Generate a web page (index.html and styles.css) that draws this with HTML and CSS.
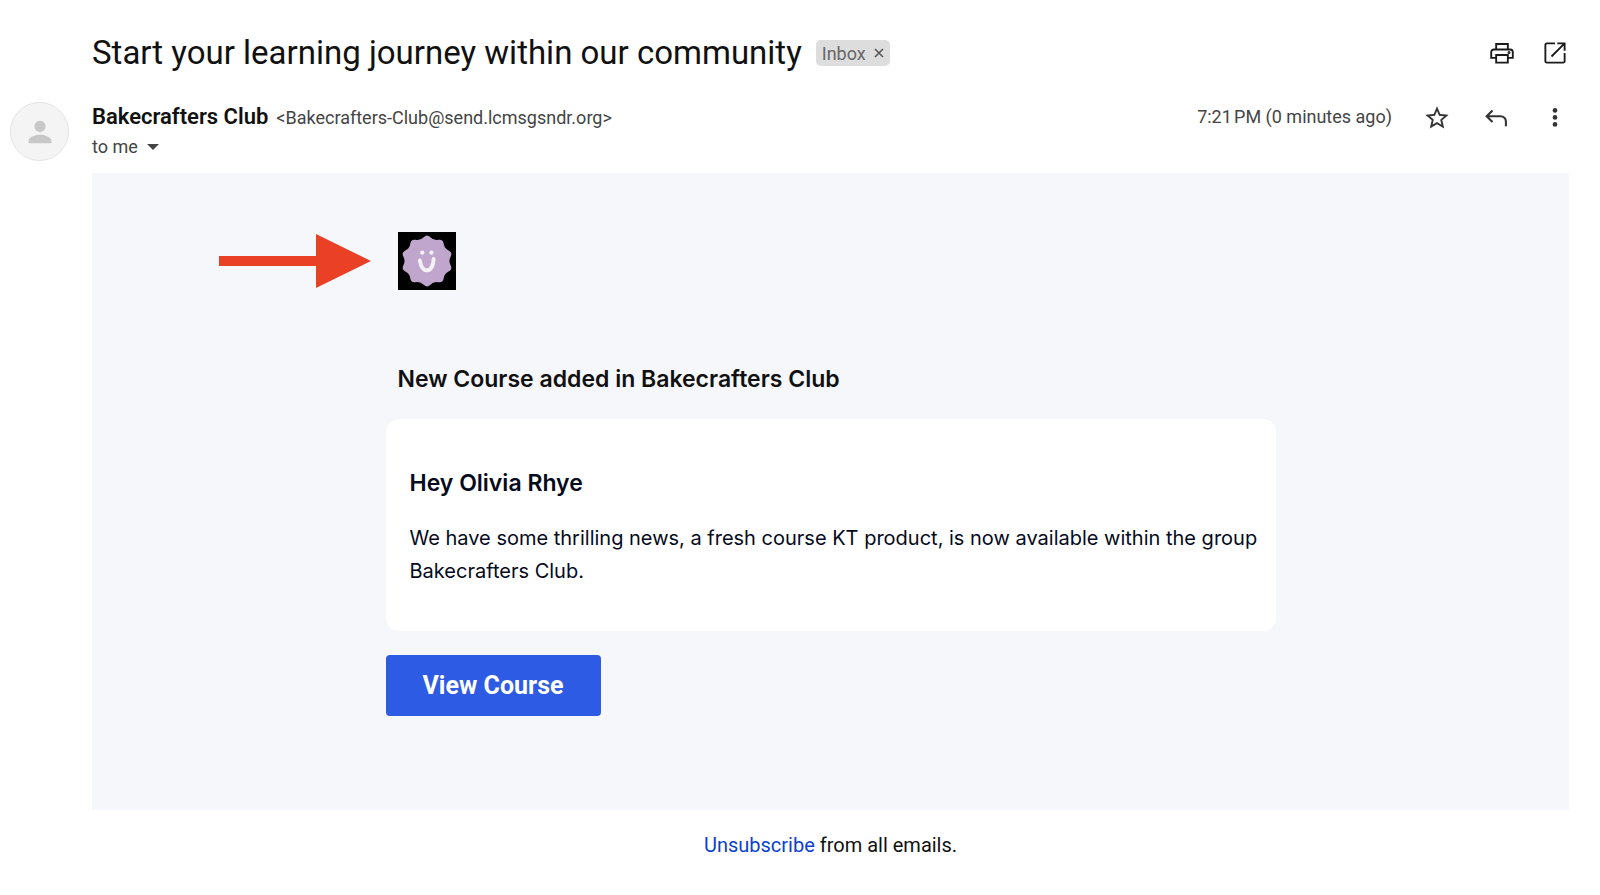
FILE: index.html
```html
<!DOCTYPE html>
<html lang="en">
<head>
    <meta charset="UTF-8">
    <title>Start your learning journey within our community</title>
    <link rel="stylesheet" href="styles.css">
</head>
<body>
    <main class="message">
        <div class="subject-row">
            <h1>Start your learning journey within our community</h1>
            <span class="label">Inbox
                <button class="label-remove" aria-label="Remove label">
                    <svg viewBox="0 0 10 10" width="10" height="10"><path d="M1 1l8 8M9 1l-8 8" stroke="#555" stroke-width="1.6"/></svg>
                </button>
            </span>
            <div class="subject-tools">
                <button class="icon" aria-label="Print">
                    <svg class="outline" viewBox="0 0 24 24"><path d="M7 8.800V4.250h10V8.800M6.500 16.200H2.750V11.200a2.200 2.200 0 0 1 2.200-2.200h14.100a2.200 2.200 0 0 1 2.200 2.200v5H17.500M7 13.750h10v6.500H7z"/><circle cx="18" cy="11.600" r=".5"/></svg>
                </button>
                <button class="icon" aria-label="Open in new window">
                    <svg class="outline" viewBox="0 0 24 24"><path d="M12 3.750H5A1.250 1.250 0 0 0 3.750 5v14A1.250 1.250 0 0 0 5 20.250h14A1.250 1.250 0 0 0 20.250 19v-7M14 3.750h6.250V10M20 4L9 15"/></svg>
                </button>
            </div>
        </div>

        <div class="avatar">
            <svg viewBox="0 0 24 24" width="34" height="34"><path fill="#c8c8c8" d="M12 12c2.2 0 4-1.8 4-4s-1.8-4-4-4-4 1.8-4 4 1.8 4 4 4zm0 2c-2.7 0-8 1.3-8 4v2h16v-2c0-2.700-5.300-4-8-4z"/></svg>
        </div>
        <header class="sender">
            <div>
                <div class="from"><b>Bakecrafters Club</b><span>&lt;Bakecrafters-Club@send.lcmsgsndr.org&gt;</span></div>
                <button class="to">to me <i class="caret"></i></button>
            </div>
            <div class="sender-tools">
                <time>7:21&#8239;PM (0 minutes ago)</time>
                <button class="icon" aria-label="Star">
                    <svg viewBox="0 0 24 24"><path d="M22 9.240l-7.190-.62L12 2 9.190 8.630 2 9.240l5.460 4.730L5.820 21 12 17.270 18.180 21l-1.630-7.030L22 9.240zM12 15.400l-3.760 2.270 1-4.280-3.320-2.880 4.380-.38L12 6.100l1.710 4.040 4.380.38-3.320 2.880 1 4.280L12 15.400z"/></svg>
                </button>
                <button class="icon" aria-label="Reply">
                    <svg viewBox="0 0 24 24"><path d="M9 5.500L4 10.500 9 15.500M4.500 10.500H16a4.500 4.500 0 0 1 4.500 4.500V19" fill="none" stroke="#333" stroke-width="1.800"/></svg>
                </button>
                <button class="icon" aria-label="More">
                    <svg viewBox="0 0 24 24"><circle cx="12" cy="5.500" r="2"/><circle cx="12" cy="11.500" r="2"/><circle cx="12" cy="17.500" r="2"/></svg>
                </button>
            </div>
        </header>

        <section class="mail">
            <div class="mail-inner">
                <div class="logo-row">
                    <svg class="arrow" viewBox="0 0 152 54" width="152" height="54"><path fill="#ea4025" d="M0 22h97V0l55 27-55 27V32H0z"/></svg>
                    <svg class="logo" viewBox="0 0 59 59" width="58" height="58">
                        <rect width="59" height="59"/>
                        <path fill="#c0a6cd" d="M26.2 5.4Q29.5 1.8 32.9 5.4Q36.2 8.900 41 8Q45.800 7.100 46.500 11.900Q47.100 16.700 51.500 18.800Q55.800 20.900 53.500 25.200Q51.200 29.500 53.500 33.800Q55.800 38.100 51.500 40.200Q47.100 42.300 46.500 47.100Q45.800 51.900 41 51Q36.200 50.100 32.900 53.700Q29.500 57.200 26.200 53.700Q22.800 50.100 18 51Q13.200 51.900 12.500 47.100Q11.900 42.300 7.500 40.200Q3.200 38.100 5.500 33.800Q7.800 29.500 5.500 25.200Q3.200 20.900 7.500 18.800Q11.900 16.700 12.500 11.900Q13.200 7.100 18 8Q22.800 8.900 26.200 5.400z"/>
                        <circle cx="24.700" cy="21" r="2.200" fill="#f3f1f5"/>
                        <circle cx="34" cy="21" r="2.200" fill="#f3f1f5"/>
                        <path d="M22.200 29c1 6 3 10 7 10s6.500-4.500 7-11.500" fill="none" stroke="#f3f1f5" stroke-width="4" stroke-linecap="round"/>
                    </svg>
                </div>
                <h2 class="mail-title">New Course added in Bakecrafters Club</h2>
                <div class="card">
                    <h2>Hey Olivia Rhye</h2>
                    <p>We have some thrilling news, a fresh course KT product, is now available within the group Bakecrafters Club.</p>
                </div>
                <a class="view-course" href="#">View Course</a>
            </div>
        </section>
        <footer><a href="#">Unsubscribe</a> from all emails.</footer>
    </main>
</body>
</html>
```
FILE: styles.css
```css
body {
    margin: 0;
    background: #fff;
    font-family: Roboto, "Liberation Sans", sans-serif;
    color: #111;
}
h1, h2, p {
    margin: 0;
}
button {
    border: 0;
    padding: 0;
    background: none;
    font: inherit;
    color: inherit;
    cursor: pointer;
}
.message {
    display: grid;
    grid-template-columns: 82px 1fr;
    padding: 32px 31px 32px 10px;
}
.subject-row {
    grid-column: 2;
    display: flex;
    align-items: center;
    height: 42px;
}
h1 {
    font-size: 33px;
    font-weight: 400;
    line-height: 42px;
}
.label {
    display: flex;
    align-items: center;
    gap: 8px;
    height: 26px;
    margin-left: 14px;
    padding: 0 6px;
    border-radius: 5px;
    background: #ddd;
    color: #666;
    font-size: 18px;
}
.label-remove {
    display: flex;
}
.subject-tools {
    display: flex;
    gap: 25px;
    margin-left: auto;
}
.icon {
    width: 28px;
    height: 28px;
}
.icon svg {
    display: block;
    width: 28px;
    height: 28px;
    fill: #333;
}
.icon .outline {
    fill: none;
    stroke: #1a1a1a;
    stroke-width: 1.6;
}
.avatar {
    display: flex;
    align-items: center;
    justify-content: center;
    box-sizing: border-box;
    width: 59px;
    height: 59px;
    margin-top: 28px;
    border: 1px solid #e4e4e4;
    border-radius: 50%;
    background: #f4f4f4;
}
.sender {
    display: flex;
    justify-content: space-between;
    height: 71px;
    margin-top: 28px;
    color: #444;
    font-size: 18px;
}
.from {
    line-height: 30px;
}
.from b {
    margin-right: 8px;
    color: #111;
    font-size: 22px;
    font-weight: 600;
}
.to {
    display: flex;
    align-items: center;
    gap: 9px;
    line-height: 28px;
}
.caret {
    border: 6px solid transparent;
    border-top-color: #444;
    border-bottom: 0;
}
.sender-tools {
    display: flex;
    align-items: center;
    gap: 31px;
    height: 32px;
}
.sender-tools time {
    line-height: 30px;
    align-self: flex-start;
}
.mail {
    grid-column: 2;
    box-sizing: border-box;
    min-height: 637px;
    padding-top: 59px;
    background: #f6f7fb;
    font-family: Inter, sans-serif;
}
.mail-inner {
    max-width: 890px;
    margin: 0 auto;
}
.logo-row {
    position: relative;
    padding-left: 12px;
    height: 59px;
}
.arrow {
    position: absolute;
    left: -167px;
    top: 2px;
}
.mail-title {
    margin: 72px 12px 24px;
    font-size: 23px;
    line-height: 32px;
    font-weight: 600;
}
.card {
    padding: 48px 16px 43px 24px;
    border-radius: 13px;
    background: #fff;
    color: #050a1c;
}
.card h2 {
    margin-bottom: 23px;
    font-size: 23px;
    line-height: 32px;
    font-weight: 600;
}
.card p {
    font-size: 20px;
    line-height: 33px;
}
.view-course {
    display: inline-block;
    margin-top: 24px;
    padding: 0 37px;
    border-radius: 4px;
    background: #2d5be3;
    color: #fff;
    font-family: Roboto, sans-serif;
    font-size: 25px;
    line-height: 61px;
    font-weight: 700;
    text-decoration: none;
}
footer {
    grid-column: 2;
    margin-top: 23px;
    text-align: center;
    font-size: 20px;
    line-height: 24px;
    color: #111;
}
footer a {
    color: #0b41cd;
    text-decoration: none;
}
```
